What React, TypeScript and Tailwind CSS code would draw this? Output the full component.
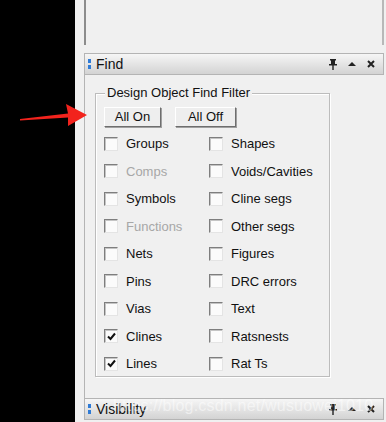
import { FC } from "react";

const font = { fontFamily: '"Liberation Sans", Arial, sans-serif' };

const left = [
  { label: "Groups" },
  { label: "Comps", disabled: true },
  { label: "Symbols" },
  { label: "Functions", disabled: true },
  { label: "Nets" },
  { label: "Pins" },
  { label: "Vias" },
  { label: "Clines", checked: true },
  { label: "Lines", checked: true },
];

const right = [
  "Shapes",
  "Voids/Cavities",
  "Cline segs",
  "Other segs",
  "Figures",
  "DRC errors",
  "Text",
  "Ratsnests",
  "Rat Ts",
];

const Check: FC<{ label: string; checked?: boolean; disabled?: boolean }> = ({
  label,
  checked,
  disabled,
}) => (
  <div className="flex items-center h-[27.5px]">
    <div className="w-[14px] h-[14px] border border-t-[#7e7e7e] border-l-[#7e7e7e] border-r-[#e4e4e4] border-b-[#e4e4e4] bg-[#fbfbfb] shadow-[inset_1px_1px_0_#c4c4c4] flex items-center justify-center">
      {checked && (
        <svg width="9" height="9" viewBox="0 0 9 9">
          <path d="M1 4.5 L3.5 7 L8 1.5" stroke="#111" strokeWidth="2" fill="none" />
        </svg>
      )}
    </div>
    <span
      className={`ml-[8px] text-[13px] leading-none ${
        disabled ? "text-[#a7a7a7]" : "text-[#111]"
      }`}
    >
      {label}
    </span>
  </div>
);

const HeaderIcons: FC = () => (
  <div className="flex items-center gap-[11px] mr-[8px]">
    <svg width="8" height="11" viewBox="0 0 8 11">
      <rect x="1" y="0" width="6" height="1.5" fill="#222" />
      <rect x="2" y="1" width="4" height="4" fill="#222" />
      <rect x="0" y="5" width="8" height="1.5" fill="#222" />
      <rect x="3.3" y="6" width="1.4" height="5" fill="#222" />
    </svg>
    <svg width="8" height="6" viewBox="0 0 8 6">
      <path d="M0 5 L4 1 L8 5 Z" fill="#222" />
    </svg>
    <svg width="8" height="8" viewBox="0 0 8 8">
      <path d="M1 1 L7 7 M7 1 L1 7" stroke="#222" strokeWidth="2" />
    </svg>
  </div>
);

const PanelHeader: FC<{ title: string }> = ({ title }) => (
  <div className="h-[22px] w-[300px] flex items-center justify-between border border-[#b4b4b4] bg-gradient-to-b from-[#f6f6f6] to-[#d3d3d3]">
    <div className="flex items-center">
      <div className="ml-[3px] flex flex-col gap-[2px]">
        <div className="w-[3px] h-[4px] bg-[#2f7bd6]" />
        <div className="w-[3px] h-[4px] bg-[#2f7bd6]" />
      </div>
      <span className="ml-[5px] text-[14px] text-[#111] leading-none">{title}</span>
    </div>
    <HeaderIcons />
  </div>
);

const Button: FC<{ label: string; w: string }> = ({ label, w }) => (
  <div
    className={`${w} h-[20px] flex items-center justify-center text-[13px] text-[#111] bg-[#eeeeee] border border-t-white border-l-white border-r-[#6e6e6e] border-b-[#6e6e6e] shadow-[1px_1px_0_#a0a0a0]`}
  >
    {label}
  </div>
);

const App: FC = () => {
  return (
    <div className="relative w-[386px] h-[422px] overflow-hidden flex bg-[#f0f0f0]" style={font}>
      <div className="w-[75px] h-full bg-black shrink-0" />
      <div className="flex-1 pl-[9px] flex flex-col">
        <div className="h-[45px] w-[300px] border-l-2 border-r-2 border-l-[#8c8c8c] border-r-[#b8b8b8] bg-[#f0f0f0]" />
        <div className="mt-[8px]">
          <PanelHeader title="Find" />
        </div>
        <div className="border-l border-[#b4b4b4] pl-[10px] pt-[18px] h-[323px]">
          <div className="relative w-[235px] h-[284px] border border-[#bcbcbc] shadow-[inset_1px_1px_0_#fff,1px_1px_0_#fff] px-[8px] pt-[13px]">
            <div className="absolute left-[9px] top-[-9px] bg-[#f0f0f0] px-[2px] text-[13px] leading-[16px] text-[#111]">
              Design Object Find Filter
            </div>
            <div className="flex gap-[14px]">
              <Button label="All On" w="w-[57px]" />
              <Button label="All Off" w="w-[61px]" />
            </div>
            <div className="grid grid-cols-[105px_1fr] mt-[3px]">
              {left.map((l, i) => (
                <>
                  <Check key={l.label} label={l.label} checked={l.checked} disabled={l.disabled} />
                  <Check key={right[i]} label={right[i]} />
                </>
              ))}
            </div>
          </div>
        </div>
        <PanelHeader title="Visibility" />
      </div>

      {/* annotation arrow */}
      <svg className="absolute left-[18px] top-[100px]" width="72" height="30" viewBox="0 0 72 30">
        <path d="M2 19 L50 13.5 L48 4 L69 15 L50 26 L50 17.5 L2 20.5 Z" fill="#f2231d" />
      </svg>

      {/* watermark */}
      <div className="absolute left-[113px] top-[398px] text-[16px] text-white/50 leading-none tracking-[0.2px]">
        https://blog.csdn.net/wusuowei1010
      </div>
    </div>
  );
};

export default App;
